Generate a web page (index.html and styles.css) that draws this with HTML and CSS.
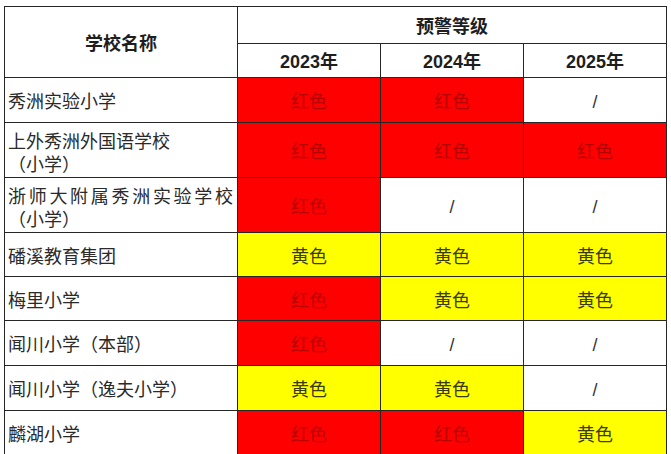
FILE: index.html
```html
<!DOCTYPE html>
<html lang="zh-CN">
<head>
<meta charset="utf-8">
<title>预警等级</title>
<link rel="stylesheet" href="styles.css">
</head>
<body>
<table class="warn">
  <colgroup>
    <col class="c-name">
    <col class="c-year">
    <col class="c-year">
    <col class="c-year">
  </colgroup>
  <thead>
    <tr class="h1">
      <th rowspan="2" class="name-head">学校名称</th>
      <th colspan="3">预警等级</th>
    </tr>
    <tr class="h2">
      <th>2023年</th>
      <th>2024年</th>
      <th>2025年</th>
    </tr>
  </thead>
  <tbody>
    <tr class="r45">
      <td class="name">秀洲实验小学</td>
      <td class="red">红色</td><td class="red">红色</td><td class="none">/</td>
    </tr>
    <tr class="r54">
      <td class="name two">上外秀洲外国语学校<br>（小学）</td>
      <td class="red">红色</td><td class="red">红色</td><td class="red">红色</td>
    </tr>
    <tr class="r55">
      <td class="name two"><span class="just">浙师大附属秀洲实验学校</span>（小学）</td>
      <td class="red">红色</td><td class="none">/</td><td class="none">/</td>
    </tr>
    <tr class="r44">
      <td class="name">磻溪教育集团</td>
      <td class="yellow">黄色</td><td class="yellow">黄色</td><td class="yellow">黄色</td>
    </tr>
    <tr class="r44">
      <td class="name">梅里小学</td>
      <td class="red">红色</td><td class="yellow">黄色</td><td class="yellow">黄色</td>
    </tr>
    <tr class="r45">
      <td class="name">闻川小学（本部）</td>
      <td class="red">红色</td><td class="none">/</td><td class="none">/</td>
    </tr>
    <tr class="r45">
      <td class="name">闻川小学（逸夫小学）</td>
      <td class="yellow">黄色</td><td class="yellow">黄色</td><td class="none">/</td>
    </tr>
    <tr class="r44">
      <td class="name">麟湖小学</td>
      <td class="red">红色</td><td class="red">红色</td><td class="yellow">黄色</td>
    </tr>
  </tbody>
</table>
</body>
</html>
```

FILE: styles.css
```css
html, body {
  margin: 0;
  padding: 0;
  background: #ffffff;
}

body {
  font-family: "Liberation Sans", "Noto Sans CJK SC", sans-serif;
  color: #222222;
}

.warn {
  margin: 6px 0 0 4px;
  border-collapse: collapse;
  table-layout: fixed;
  width: 662px;
  font-size: 18px;
}

.c-name { width: 233px; }
.c-year { width: 143px; }

.warn th,
.warn td {
  border: 1.5px solid #262626;
  padding: 5px 0 0 0;
  text-align: center;
  vertical-align: middle;
  line-height: 23px;
}

.warn th {
  font-weight: bold;
  color: #1e1e1e;
  padding-top: 4px;
}

.h1 { height: 37px; }
.h2 { height: 34px; }
.r44 { height: 44px; }
.r45 { height: 45px; }
.r54 { height: 54px; }
.r55 { height: 55px; }

.warn td.name {
  text-align: left;
  padding: 5px 4px 0 3px;
  color: #2a2a2a;
}

.warn td.two {
  padding-top: 8px;
}

.just {
  display: block;
  text-align: justify;
  text-align-last: justify;
}

.red {
  background: #ff0000;
  color: #b50000;
}

.yellow {
  background: #ffff00;
  color: #3a3a10;
}

.none {
  background: #ffffff;
  color: #333333;
}
```
